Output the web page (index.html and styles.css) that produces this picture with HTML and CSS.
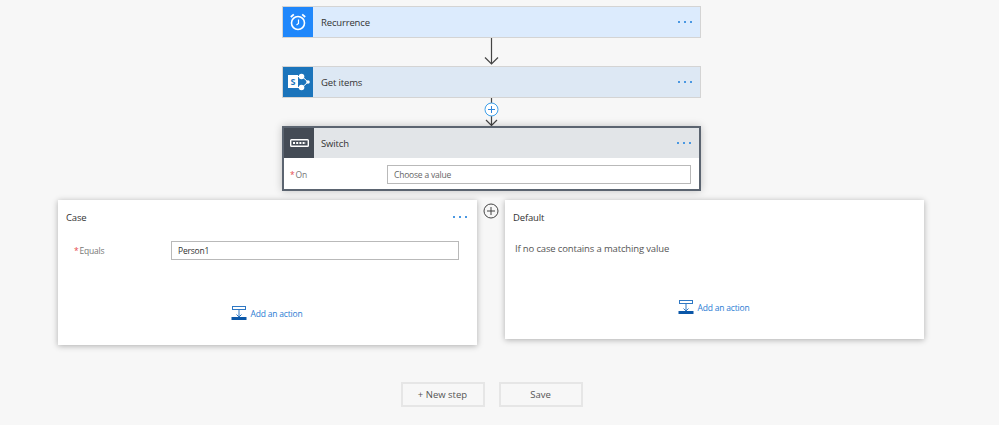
FILE: index.html
```html
<!DOCTYPE html>
<html lang="en">
<head>
    <meta charset="UTF-8">
    <title>Switch flow</title>
    <link rel="stylesheet" href="styles.css">
</head>
<body>
    <div class="canvas">
        <div class="step step-recurrence">
            <div class="step-icon icon-recurrence">
                <svg width="22" height="22" viewBox="0 0 22 22" fill="none" stroke="#fff">
                    <circle cx="11" cy="12" r="6.5" stroke-width="1.6"/>
                    <path d="M11.500 8.500V12.500L9.500 14" stroke-width="1.2"/>
                    <path d="M3.800 6 6.800 3.400M18.200 6 15.200 3.400" stroke-width="1.8"/>
                </svg>
            </div>
            <div class="step-title">Recurrence</div>
            <div class="dots"><i></i><i></i><i></i></div>
        </div>

        <svg class="link" width="28" height="28" viewBox="0 0 28 28" fill="none" stroke="#444">
            <path d="M13.500 0V26M7 19.500 13.500 26 20 19.500" stroke-width="1.2"/>
        </svg>

        <div class="step step-sharepoint">
            <div class="step-icon icon-sharepoint">
                <svg width="26" height="22" viewBox="0 0 26 22">
                    <path d="M12 5.500H17L23 11 17 16.500H12" fill="none" stroke="#fff" stroke-width="1"/>
                    <circle cx="16.500" cy="5.500" r="2.800" fill="#fff"/>
                    <circle cx="16.500" cy="16.500" r="2.800" fill="#fff"/>
                    <circle cx="23" cy="11" r="1.800" fill="#fff"/>
                    <rect x="3" y="4" width="10" height="13" fill="#fff"/>
                    <text x="8" y="14" class="sp-letter">S</text>
                </svg>
            </div>
            <div class="step-title">Get items</div>
            <div class="dots"><i></i><i></i><i></i></div>
        </div>

        <div class="link-plus">
            <svg width="28" height="28" viewBox="0 0 28 28" fill="none">
                <path d="M13.500 0V27.500M8 22 13.500 27.500 19 22" stroke="#444" stroke-width="1.2"/>
                <circle cx="13.500" cy="11.500" r="6.500" fill="#fff" stroke="#3fa0ea"/>
                <path d="M13.500 8V15M10 11.500H17" stroke="#2f86dc"/>
            </svg>
        </div>

        <div class="switch">
            <div class="switch-head">
                <div class="step-icon icon-switch">
                    <svg width="19" height="8" viewBox="0 0 19 8">
                        <rect x="0.700" y="0.700" width="17.600" height="6.600" rx="0.800" fill="none" stroke="#fff" stroke-width="1.400"/>
                        <path d="M3 4H16" stroke="#fff" stroke-width="2" stroke-dasharray="2 1.200"/>
                    </svg>
                </div>
                <div class="step-title">Switch</div>
                <div class="dots"><i></i><i></i><i></i></div>
            </div>
            <div class="switch-body">
                <div class="field-label label-on"><span class="req">*</span>On</div>
                <div class="input input-on">Choose a value</div>
            </div>
        </div>

        <div class="branches">
            <div class="branch branch-case">
                <div class="branch-head">
                    <span class="branch-title">Case</span>
                    <div class="dots"><i></i><i></i><i></i></div>
                </div>
                <div class="case-row">
                    <div class="field-label label-equals"><span class="req">*</span>Equals</div>
                    <div class="input input-equals">Person1</div>
                </div>
                <div class="add-action add-case">
                    <svg width="16" height="15" viewBox="0 0 16 15" fill="none">
                        <rect x="1.500" y="0.500" width="13" height="3" stroke="#2f78c4"/>
                        <path d="M8 3.500V11M5.500 8.500 8 11 10.500 8.500" stroke="#2f78c4"/>
                        <rect x="0.500" y="11" width="15" height="3" fill="#0b57a8"/>
                    </svg>
                    <span>Add an action</span>
                </div>
            </div>

            <div class="branch-gap">
                <svg width="16" height="16" viewBox="0 0 16 16" fill="none" stroke="#444">
                    <circle cx="8" cy="8" r="7"/>
                    <path d="M8 4V12M4 8H12"/>
                </svg>
            </div>

            <div class="branch branch-default">
                <div class="branch-head">
                    <span class="branch-title">Default</span>
                </div>
                <div class="default-text">If no case contains a matching value</div>
                <div class="add-action add-default">
                    <svg width="16" height="15" viewBox="0 0 16 15" fill="none">
                        <rect x="1.500" y="0.500" width="13" height="3" stroke="#2f78c4"/>
                        <path d="M8 3.500V11M5.500 8.500 8 11 10.500 8.500" stroke="#2f78c4"/>
                        <rect x="0.500" y="11" width="15" height="3" fill="#0b57a8"/>
                    </svg>
                    <span>Add an action</span>
                </div>
            </div>
        </div>

        <div class="actions">
            <div class="btn">+ New step</div>
            <div class="btn">Save</div>
        </div>
    </div>
</body>
</html>
```

FILE: styles.css
```css
html, body {
    height: 100%;
}

body {
    margin: 0;
    background-color: #f7f7f7;
    font-family: "Open Sans", sans-serif;
    font-size: 9.5px;
    letter-spacing: -0.15px;
    color: #333;
    overflow: hidden;
}

.canvas {
    width: 983px;
    padding-top: 6px;
    display: flex;
    flex-direction: column;
    align-items: center;
}

.link,
.link-plus svg {
    display: block;
}

.step {
    box-sizing: border-box;
    width: 419px;
    height: 32px;
    display: flex;
    align-items: center;
    border: 1px solid #d4d4d4;
    padding-right: 8px;
}

.step-recurrence {
    background-color: #dcebfd;
}

.step-sharepoint {
    background-color: #dde8f4;
}

.step-icon {
    width: 30px;
    height: 30px;
    flex: none;
    display: flex;
    align-items: center;
    justify-content: center;
    margin-right: 8px;
}

.icon-recurrence {
    background-color: #1f87fb;
}

.icon-sharepoint {
    background-color: #1b74bb;
}

.sp-letter {
    font-size: 9px;
    font-weight: 700;
    fill: #1b74bb;
    text-anchor: middle;
}

.icon-switch {
    background-color: #444b55;
    margin-right: 7px;
}

.step-title {
    flex: 1;
    color: #333;
}

.dots {
    display: flex;
    gap: 4px;
}

.dots i {
    display: block;
    width: 2px;
    height: 2px;
    background-color: #4a98e2;
}

.switch {
    box-sizing: border-box;
    width: 419px;
    height: 65px;
    border: 2px solid #5b6470;
    background-color: #fff;
    box-shadow: 0 0 8px rgba(0, 0, 0, 0.22);
    position: relative;
}

.switch-head {
    display: flex;
    align-items: center;
    height: 30px;
    background-color: #e2e5e8;
    padding-right: 8px;
}

.switch-body {
    box-sizing: border-box;
    display: flex;
    align-items: center;
    height: 31px;
    padding: 2px 8px 0 6px;
}

.field-label {
    color: #777;
    font-size: 8.5px;
    letter-spacing: -0.2px;
}

.req {
    color: #e5484d;
    margin-right: 1px;
}

.label-on {
    width: 97px;
}

.input {
    box-sizing: border-box;
    height: 19px;
    line-height: 17px;
    background-color: #fff;
    border: 1px solid #b9b9b9;
    padding: 0 6px;
    flex: 1;
    font-size: 8.5px;
    letter-spacing: -0.2px;
}

.input-on {
    color: #666;
}

.input-equals {
    color: #333;
}

.branches {
    display: flex;
    align-items: flex-start;
    margin-top: 9px;
    margin-right: 1px;
}

.branch {
    box-sizing: border-box;
    width: 419px;
    background-color: #fff;
    box-shadow: 0 1px 6px rgba(0, 0, 0, 0.3);
    padding: 0 8px;
}

.branch-case {
    height: 145px;
}

.branch-default {
    height: 139px;
}

.branch-gap {
    width: 28px;
    display: flex;
    justify-content: center;
    padding-top: 3px;
}

.branch-head {
    display: flex;
    align-items: center;
    justify-content: space-between;
    height: 34px;
}

.branch-head .dots {
    margin-right: 2px;
}

.case-row {
    display: flex;
    align-items: center;
    margin-top: 7px;
    padding: 0 10px 0 8px;
}

.label-equals {
    width: 97px;
}

.default-text {
    padding-left: 2px;
    margin-top: 8px;
    color: #555;
}

.add-action {
    display: flex;
    align-items: center;
    justify-content: center;
    gap: 4px;
    color: #2b7cd3;
    font-size: 8.5px;
    letter-spacing: -0.2px;
    padding-right: 2px;
}

.add-case {
    margin-top: 46px;
}

.add-default {
    margin-top: 45px;
}

.actions {
    display: flex;
    gap: 14px;
    margin-top: 37px;
}

.btn {
    box-sizing: border-box;
    width: 84px;
    height: 25px;
    line-height: 21px;
    border: 2px solid #e6e6e6;
    text-align: center;
    color: #555;
    letter-spacing: 0;
}
```
